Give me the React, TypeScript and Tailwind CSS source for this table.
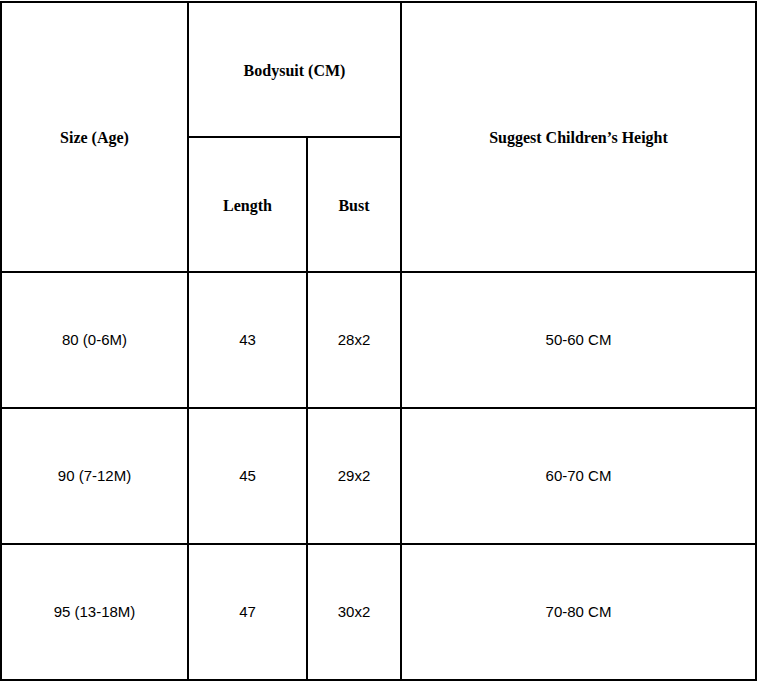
export default function App() {
  const head = "bg-white flex items-center justify-center pt-[2px] font-['Liberation_Serif',serif] font-bold text-[16px] text-black";
  const cell = "bg-white flex items-center justify-center font-['Liberation_Sans',Arial,sans-serif] text-[15px] text-black";
  const rows = [
    ["80 (0-6M)", "43", "28x2", "50-60 CM"],
    ["90 (7-12M)", "45", "29x2", "60-70 CM"],
    ["95 (13-18M)", "47", "30x2", "70-80 CM"],
  ];

  return (
    <div className="w-[759px] h-[682px] bg-white pt-px">
      <div className="grid grid-cols-[185px_117px_92px_353px] grid-rows-[133px_133px_134px_134px_134px] gap-[2px] bg-black p-[2px] w-[757px]">
        <div className={`${head} row-span-2`}>Size (Age)</div>
        <div className={`${head} col-span-2`}>Bodysuit (CM)</div>
        <div className={`${head} row-span-2`}>Suggest Children’s Height</div>
        <div className={head}>Length</div>
        <div className={head}>Bust</div>
        {rows.map((r) =>
          r.map((v, i) => (
            <div key={r[0] + i} className={cell}>
              {v}
            </div>
          ))
        )}
      </div>
    </div>
  );
}
